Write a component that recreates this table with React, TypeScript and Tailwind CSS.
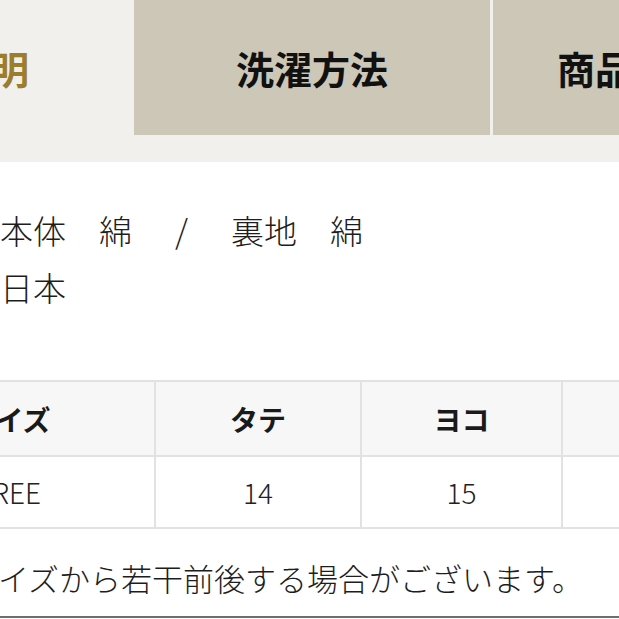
import React from 'react';

const TABS = [
  { label: '商品説明', active: true },
  { label: '洗濯方法', active: false },
  { label: '商品レビュー', active: false },
];

const HEAD = ['サイズ', 'タテ', 'ヨコ', 'マチ'];
const ROW = ['FREE', '14', '15', '6'];

const App: React.FC = () => {
  return (
    <div className="w-[619px] h-[619px] overflow-hidden bg-white text-[#222] font-['Noto_Sans_CJK_JP','Noto_Sans',sans-serif]">
      <div className="h-[162px] bg-[#f1f0ec]">
        <div className="flex gap-[3px] ml-[-225px] h-[135px]">
          {TABS.map((tab) => (
            <div
              key={tab.label}
              className={
                tab.active
                  ? 'w-[356px] shrink-0 flex items-center justify-center bg-[#f1f0ec] text-[#9b7d2c] text-[38px] font-bold'
                  : 'w-[356px] shrink-0 flex items-center justify-center bg-[#ccc7b6] text-[#111] text-[38px] font-bold'
              }
            >
              {tab.label}
            </div>
          ))}
        </div>
      </div>

      <div className="mt-[40px] ml-[-180px] grid grid-cols-[180px_1fr] text-[33px] leading-[57px] font-light text-[#1d1d1d]">
        <span>素材</span>
        <span className="whitespace-pre">
          本体　綿　<span className="inline-block w-[1em] text-center">/</span>　裏地　綿
        </span>
        <span>原産国</span>
        <span>日本</span>
      </div>

      <table className="mt-[64px] ml-[-138px] w-[903px] max-w-none table-fixed border-collapse">
        <colgroup>
          <col className="w-[292px]" />
          <col className="w-[206px]" />
          <col className="w-[201px]" />
          <col className="w-[204px]" />
        </colgroup>
        <thead>
          <tr className="h-[75px] bg-[#f7f7f7]">
            {HEAD.map((h) => (
              <th key={h} className="border-2 border-[#e2e2e2] text-center text-[28px] font-bold text-[#1a1a1a]">
                {h}
              </th>
            ))}
          </tr>
        </thead>
        <tbody>
          <tr className="h-[72px]">
            {ROW.map((c, i) => (
              <td key={i} className="border-2 border-[#e2e2e2] text-center text-[28px] font-light text-[#222]">
                {c}
              </td>
            ))}
          </tr>
        </tbody>
      </table>

      <p className="mt-[24px] ml-[-33px] text-[31px] leading-[50px] font-light whitespace-nowrap text-[#1d1d1d]">
        サイズから若干前後する場合がございます。
      </p>

      <div className="mt-[13px] h-[2px] bg-[#6e6e6e]" />
    </div>
  );
};

export default App;
